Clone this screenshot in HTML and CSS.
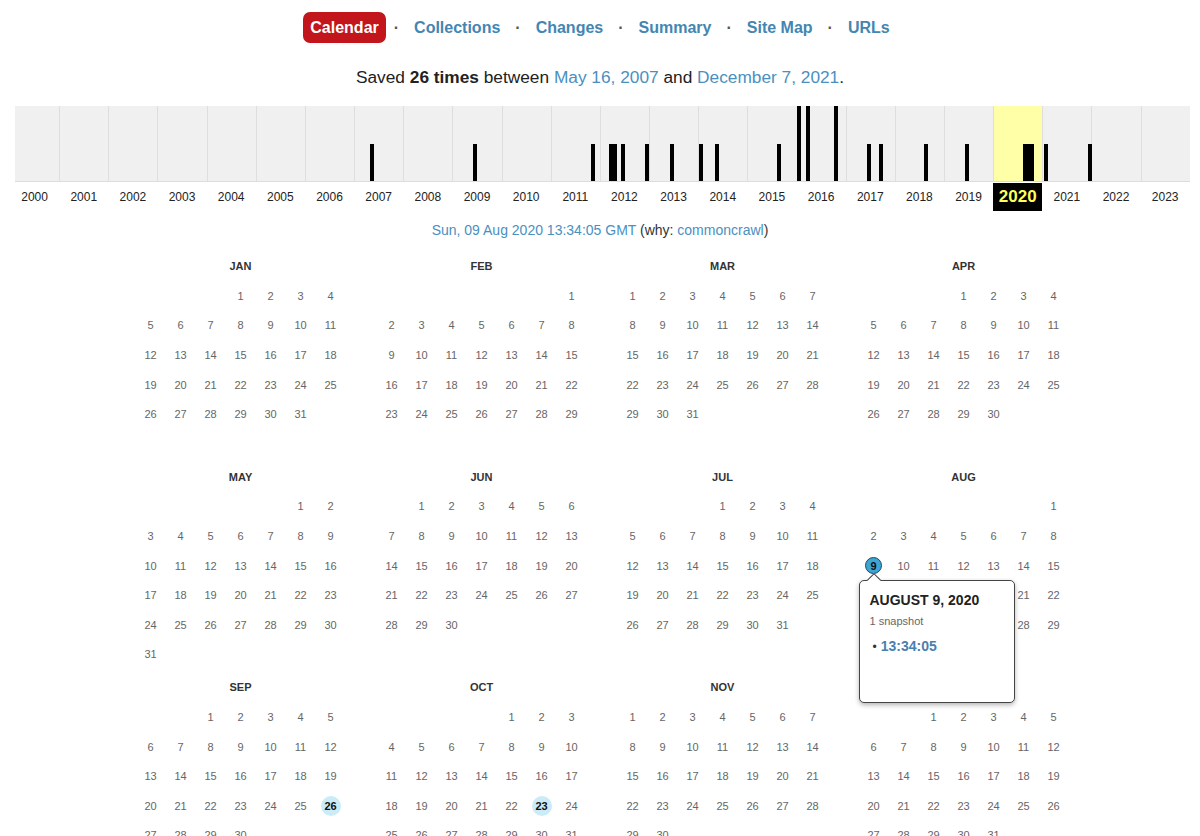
FILE: index.html
```html
<!DOCTYPE html>
<html lang="en">
<head>
  <meta charset="UTF-8">
  <meta name="viewport" content="width=device-width, initial-scale=1.0">
  <title>Wayback Calendar</title>
  <link rel="stylesheet" href="styles.css">
</head>
<body>
  <nav class="nav">
    <a href="#" class="active">Calendar</a>
    <span class="sep">·</span>
    <a href="#">Collections</a>
    <span class="sep">·</span>
    <a href="#">Changes</a>
    <span class="sep">·</span>
    <a href="#">Summary</a>
    <span class="sep">·</span>
    <a href="#">Site Map</a>
    <span class="sep">·</span>
    <a href="#">URLs</a>
  </nav>

  <p class="saved">Saved <b>26 times</b> between <a href="#">May 16, 2007</a> and <a href="#">December 7, 2021</a>.</p>

  <div class="sparkline">
    <div class="chart" id="chart"></div>
    <div class="years" id="years"></div>
  </div>

  <p class="capture"><a href="#">Sun, 09 Aug 2020 13:34:05 GMT</a> (why: <a href="#">commoncrawl</a>)</p>

  <div class="calendar" id="calendar"></div>

  <script>
    const chartEl = document.getElementById('chart');
    const yearsEl = document.getElementById('years');
    const currentYear = 2020;

    for (let y = 2000; y <= 2023; y++) {
      const col = document.createElement('div');
      col.className = 'year-col' + (y === currentYear ? ' current' : '');
      chartEl.appendChild(col);

      const label = document.createElement('span');
      label.className = y === currentYear ? 'current' : '';
      label.textContent = y;
      yearsEl.appendChild(label);
    }

    // [left px, width px, tall]
    const bars = [
      [355, 4, 0], [458, 4, 0], [576, 4, 0], [594, 8, 0], [606, 4, 0],
      [630, 4, 0], [655, 4, 0], [684, 4, 0], [700, 4, 0], [762, 4, 0],
      [782, 4, 1], [791, 4, 1], [819, 4, 1], [852, 4, 0], [864, 4, 0],
      [909, 4, 0], [950, 4, 0], [1008, 11, 0], [1029, 4, 0], [1073, 4, 0]
    ];
    bars.forEach(([left, width, tall]) => {
      const bar = document.createElement('div');
      bar.className = 'bar' + (tall ? ' tall' : '');
      bar.style.left = left + 'px';
      bar.style.width = width + 'px';
      chartEl.appendChild(bar);
    });

    // calendar for 2020
    const calendarEl = document.getElementById('calendar');
    const monthNames = ['JAN', 'FEB', 'MAR', 'APR', 'MAY', 'JUN', 'JUL', 'AUG', 'SEP', 'OCT', 'NOV', 'DEC'];
    const snapshots = { '7-9': 'active', '8-26': 'snap', '9-23': 'snap' };

    monthNames.forEach((name, m) => {
      const month = document.createElement('div');
      month.className = 'month';
      month.innerHTML = `<div class="month-title">${name}</div>`;

      const days = document.createElement('div');
      days.className = 'days';
      const first = new Date(2020, m, 1).getDay();
      const count = new Date(2020, m + 1, 0).getDate();

      for (let i = 0; i < first; i++) {
        days.appendChild(document.createElement('div'));
      }
      for (let d = 1; d <= count; d++) {
        const cell = document.createElement('div');
        const state = snapshots[m + '-' + d];
        cell.className = 'day' + (state ? ' ' + state : '');
        cell.innerHTML = `<span>${d}</span>`;
        if (state === 'active') {
          cell.innerHTML += `
            <div class="popup">
              <div class="popup-title">AUGUST 9, 2020</div>
              <div class="popup-count">1 snapshot</div>
              <ul>
                <li><a href="#">13:34:05</a></li>
              </ul>
            </div>`;
        }
        days.appendChild(cell);
      }

      month.appendChild(days);
      calendarEl.appendChild(month);
    });
  </script>
</body>
</html>
```

FILE: styles.css
```css
body {
  margin: 0;
  font-family: "Liberation Sans", Arial, sans-serif;
  color: #333;
  background-color: #fff;
}
a {
  text-decoration: none;
}
.nav {
  display: flex;
  justify-content: center;
  align-items: center;
  padding-top: 12px;
}
.nav a {
  padding: 0 7px;
  line-height: 31px;
  font-size: 16px;
  font-weight: bold;
  color: #4386b2;
  border-radius: 7px;
}
.nav a.active {
  background-color: #c2151c;
  color: #fff;
}
.nav .sep {
  margin: 0 8px;
  font-size: 16px;
  font-weight: bold;
  color: #555;
}
.saved {
  margin: 24px 0 0;
  text-align: center;
  font-size: 17.3px;
  line-height: 20px;
  color: #222;
}
.saved a {
  color: #4a90bf;
}
.sparkline {
  width: 1180px;
  margin: 19px 0 0 10px;
}
.chart {
  position: relative;
  display: flex;
  height: 75px;
  margin-left: 5px;
  background-color: #f0f0f0;
  border-bottom: 1px solid #dcdcdc;
}
.year-col {
  flex: 0 0 49.17px;
  box-sizing: border-box;
}
.year-col:first-child {
  flex-basis: 44.17px;
}
.year-col + .year-col {
  border-left: 1px solid #dedede;
}
.year-col.current {
  background-color: #ffffa8;
}
.bar {
  position: absolute;
  bottom: 0;
  height: 37px;
  background-color: #000;
}
.bar.tall {
  height: 75px;
}
.years {
  display: flex;
  margin-top: 1px;
}
.years span {
  flex: 0 0 49.17px;
  text-align: center;
  font-size: 12px;
  line-height: 28px;
  color: #222;
}
.years span.current {
  background-color: #000;
  color: #ffff5a;
  font-size: 17px;
  font-weight: bold;
}
.capture {
  margin: 10px 0 0;
  text-align: center;
  font-size: 14px;
  line-height: 18px;
  color: #333;
}
.capture a {
  color: #4a90bf;
}
.calendar {
  display: grid;
  grid-template-columns: repeat(4, 241px);
  row-gap: 3px;
  width: 964px;
  margin: 12px 0 0 120px;
}
.month-title {
  text-align: center;
  font-size: 11px;
  font-weight: bold;
  line-height: 30px;
  color: #333;
}
.days {
  display: grid;
  grid-template-columns: repeat(7, 30px);
  grid-template-rows: repeat(6, 29.6px);
  width: 210px;
  margin: 0 auto;
}
.day {
  position: relative;
  display: flex;
  align-items: center;
  justify-content: center;
  font-size: 11px;
  color: #666;
}
.day span {
  display: flex;
  align-items: center;
  justify-content: center;
  width: 20px;
  height: 20px;
  border-radius: 50%;
}
.day.snap span {
  background-color: #cbecf7;
  color: #111;
  font-weight: bold;
}
.day.active span {
  box-sizing: border-box;
  width: 17px;
  height: 17px;
  background-color: #3ea4d4;
  border: 1px solid #1d4b60;
  color: #111;
  font-weight: bold;
}
.popup {
  position: absolute;
  left: 0;
  top: 100%;
  z-index: 5;
  box-sizing: border-box;
  width: 156px;
  height: 123px;
  padding: 11px 10px;
  background-color: #fff;
  border: 1px solid #444;
  border-radius: 5px;
  box-shadow: 0 2px 5px rgba(0, 0, 0, 0.3);
  text-align: left;
}
.popup::before {
  content: "";
  position: absolute;
  top: -6px;
  left: 9px;
  width: 9px;
  height: 9px;
  background-color: #fff;
  border-left: 1px solid #444;
  border-top: 1px solid #444;
  transform: rotate(45deg);
}
.popup-title {
  font-size: 14px;
  font-weight: bold;
  line-height: 17px;
  color: #222;
}
.popup-count {
  margin-top: 6px;
  font-size: 11px;
  line-height: 13px;
  color: #666;
}
.popup ul {
  margin: 10px 0 0;
  padding: 0 0 0 3px;
  list-style: none;
}
.popup li {
  font-size: 14px;
  line-height: 17px;
}
.popup li::before {
  content: "•";
  margin-right: 4px;
  font-size: 12px;
  color: #333;
}
.popup li a {
  font-weight: bold;
  color: #4a80b0;
}
```
